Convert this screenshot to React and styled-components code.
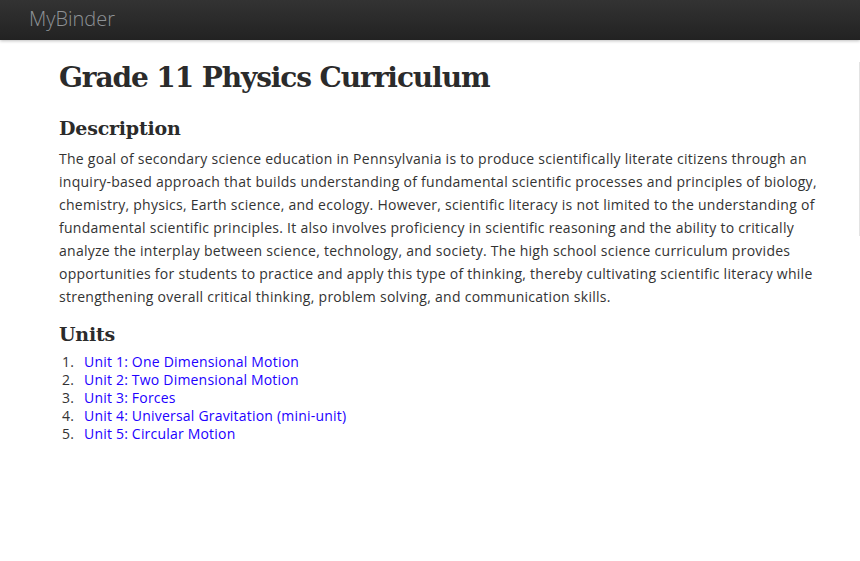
import styled, { createGlobalStyle } from 'styled-components';

const GlobalStyle = createGlobalStyle`
  html, body {
    margin: 0;
    padding: 0;
    background: #fff;
    overflow: hidden;
  }
  body {
    font-family: 'Open Sans', 'Noto Sans', sans-serif;
    color: #333;
  }
`;

const units = [
  'Unit 1: One Dimensional Motion',
  'Unit 2: Two Dimensional Motion',
  'Unit 3: Forces',
  'Unit 4: Universal Gravitation (mini-unit)',
  'Unit 5: Circular Motion',
];

export default function App() {
  return (
    <>
      <GlobalStyle />
      <NavBar>
        <Brand>MyBinder</Brand>
      </NavBar>
      <Page>
        <Main>
          <Title>Grade 11 Physics Curriculum</Title>
          <SectionHeading>Description</SectionHeading>
          <Paragraph>
            The goal of secondary science education in Pennsylvania is to produce scientifically literate
            citizens through an inquiry-based approach that builds understanding of fundamental scientific
            processes and principles of biology, chemistry, physics, Earth science, and ecology. However,
            scientific literacy is not limited to the understanding of fundamental scientific principles. It
            also involves proficiency in scientific reasoning and the ability to critically analyze the
            interplay between science, technology, and society. The high school science curriculum provides
            opportunities for students to practice and apply this type of thinking, thereby cultivating
            scientific literacy while strengthening overall critical thinking, problem solving, and
            communication skills.
          </Paragraph>
          <SectionHeading>Units</SectionHeading>
          <UnitList>
            {units.map((u) => (
              <li key={u}>
                <UnitLink href="#">{u}</UnitLink>
              </li>
            ))}
          </UnitList>
        </Main>
        <Sidebar />
      </Page>
    </>
  );
}

const NavBar = styled.div`
  height: 40px;
  box-sizing: border-box;
  background: linear-gradient(to bottom, #333 0%, #222 100%);
  box-shadow: 0 1px 3px rgba(0, 0, 0, 0.25);
  display: flex;
  align-items: center;
  padding: 0 0 4px 29px;
  position: relative;
  z-index: 1;
`;

const Brand = styled.span`
  font-family: 'Open Sans', sans-serif;
  font-weight: 300;
  font-size: 20px;
  color: #8e9296;
`;

const Page = styled.div`
  display: flex;
  align-items: flex-start;
`;

const Main = styled.div`
  width: 765px;
  padding-left: 59px;
  padding-right: 35px;
  flex-shrink: 0;
`;

const Sidebar = styled.div`
  margin-top: 22px;
  height: 174px;
  width: 200px;
  flex-shrink: 0;
  border-left: 1px solid #e3e3e3;
`;

const Title = styled.h1`
  font-family: 'DejaVu Serif', 'Liberation Serif', serif;
  font-weight: bold;
  font-size: 28px;
  letter-spacing: -1.1px;
  color: #2b2b2b;
  margin: 20px 0 19px;
  line-height: 36px;
`;

const SectionHeading = styled.h2`
  font-family: 'DejaVu Serif', 'Liberation Serif', serif;
  font-weight: bold;
  font-size: 19px;
  letter-spacing: -0.2px;
  color: #2b2b2b;
  margin: 0 0 6px;
  line-height: 26px;
`;

const Paragraph = styled.p`
  font-size: 14px;
  letter-spacing: 0.27px;
  line-height: 23px;
  margin: 0 0 13px;
  color: #333;
`;

const UnitList = styled.ol`
  margin: 0;
  padding: 0;
  list-style: none;
  counter-reset: unit;
  font-size: 14px;
  letter-spacing: 0.2px;
  line-height: 18px;
  color: #333;

  li {
    display: flex;
    counter-increment: unit;
  }

  li::before {
    content: counter(unit) '.';
    box-sizing: border-box;
    width: 25px;
    padding-left: 3px;
    flex-shrink: 0;
  }
`;

const UnitLink = styled.a`
  color: #2200ff;
  text-decoration: none;
`;
